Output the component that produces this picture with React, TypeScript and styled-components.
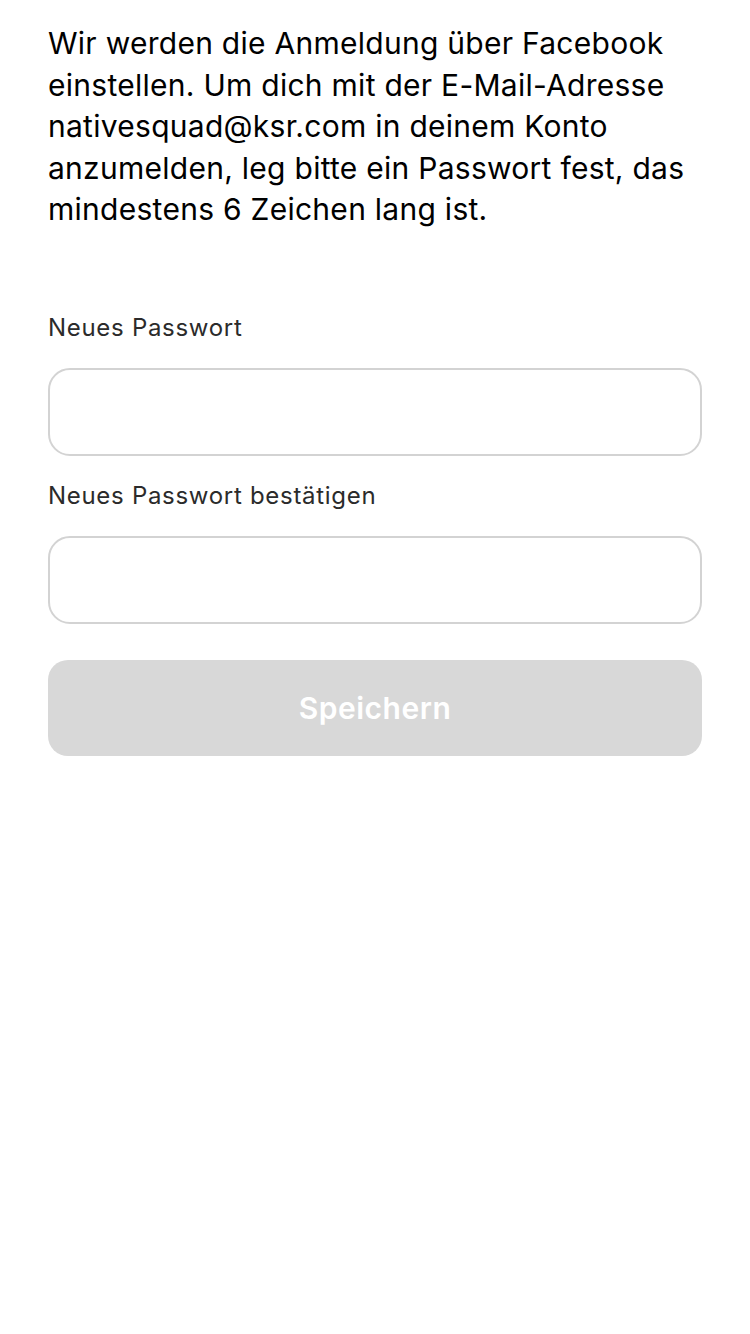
import React from "react";
import styled, { createGlobalStyle } from "styled-components";

const GlobalStyle = createGlobalStyle`
  html, body { margin: 0; padding: 0; background: #ffffff; }
  body { font-family: Inter, "Noto Sans", sans-serif; -webkit-font-smoothing: antialiased; }
`;

const Page = styled.main`
  width: 750px;
  min-height: 1334px;
  box-sizing: border-box;
  padding: 23px 48px 0 48px;
  display: flex;
  flex-direction: column;
  background: #fff;
`;

const Intro = styled.p`
  margin: 0;
  font-size: 30px;
  line-height: 41.5px;
  color: #000;
  letter-spacing: 0.27px;
`;

const Form = styled.form`
  margin-top: 83px;
  display: flex;
  flex-direction: column;
`;

const Label = styled.label`
  font-size: 24px;
  line-height: 28px;
  color: #2b2b2b;
  letter-spacing: 0.7px;
  margin-bottom: 26px;
`;

const Input = styled.input`
  box-sizing: border-box;
  width: 100%;
  height: 88px;
  border: 2px solid #d3d3d3;
  border-radius: 22px;
  background: #fff;
  outline: none;
  padding: 0 22px;
  font-size: 28px;
  margin-bottom: 26px;
`;

const Button = styled.button`
  margin-top: 10px;
  height: 96px;
  border: none;
  border-radius: 20px;
  background: #d8d8d8;
  color: #ffffff;
  font-family: Inter, "Noto Sans", sans-serif;
  font-size: 30px;
  font-weight: 600;
  letter-spacing: 0.5px;
`;

export default function App() {
  return (
    <>
      <GlobalStyle />
      <Page>
        <Intro>
          Wir werden die Anmeldung über Facebook einstellen. Um dich mit der E-Mail-Adresse
          nativesquad@ksr.com in deinem Konto anzumelden, leg bitte ein Passwort fest, das
          mindestens 6 Zeichen lang ist.
        </Intro>
        <Form onSubmit={(e) => e.preventDefault()}>
          <Label htmlFor="pw1">Neues Passwort</Label>
          <Input id="pw1" type="password" />
          <Label htmlFor="pw2">Neues Passwort bestätigen</Label>
          <Input id="pw2" type="password" />
          <Button type="submit" disabled>Speichern</Button>
        </Form>
      </Page>
    </>
  );
}
